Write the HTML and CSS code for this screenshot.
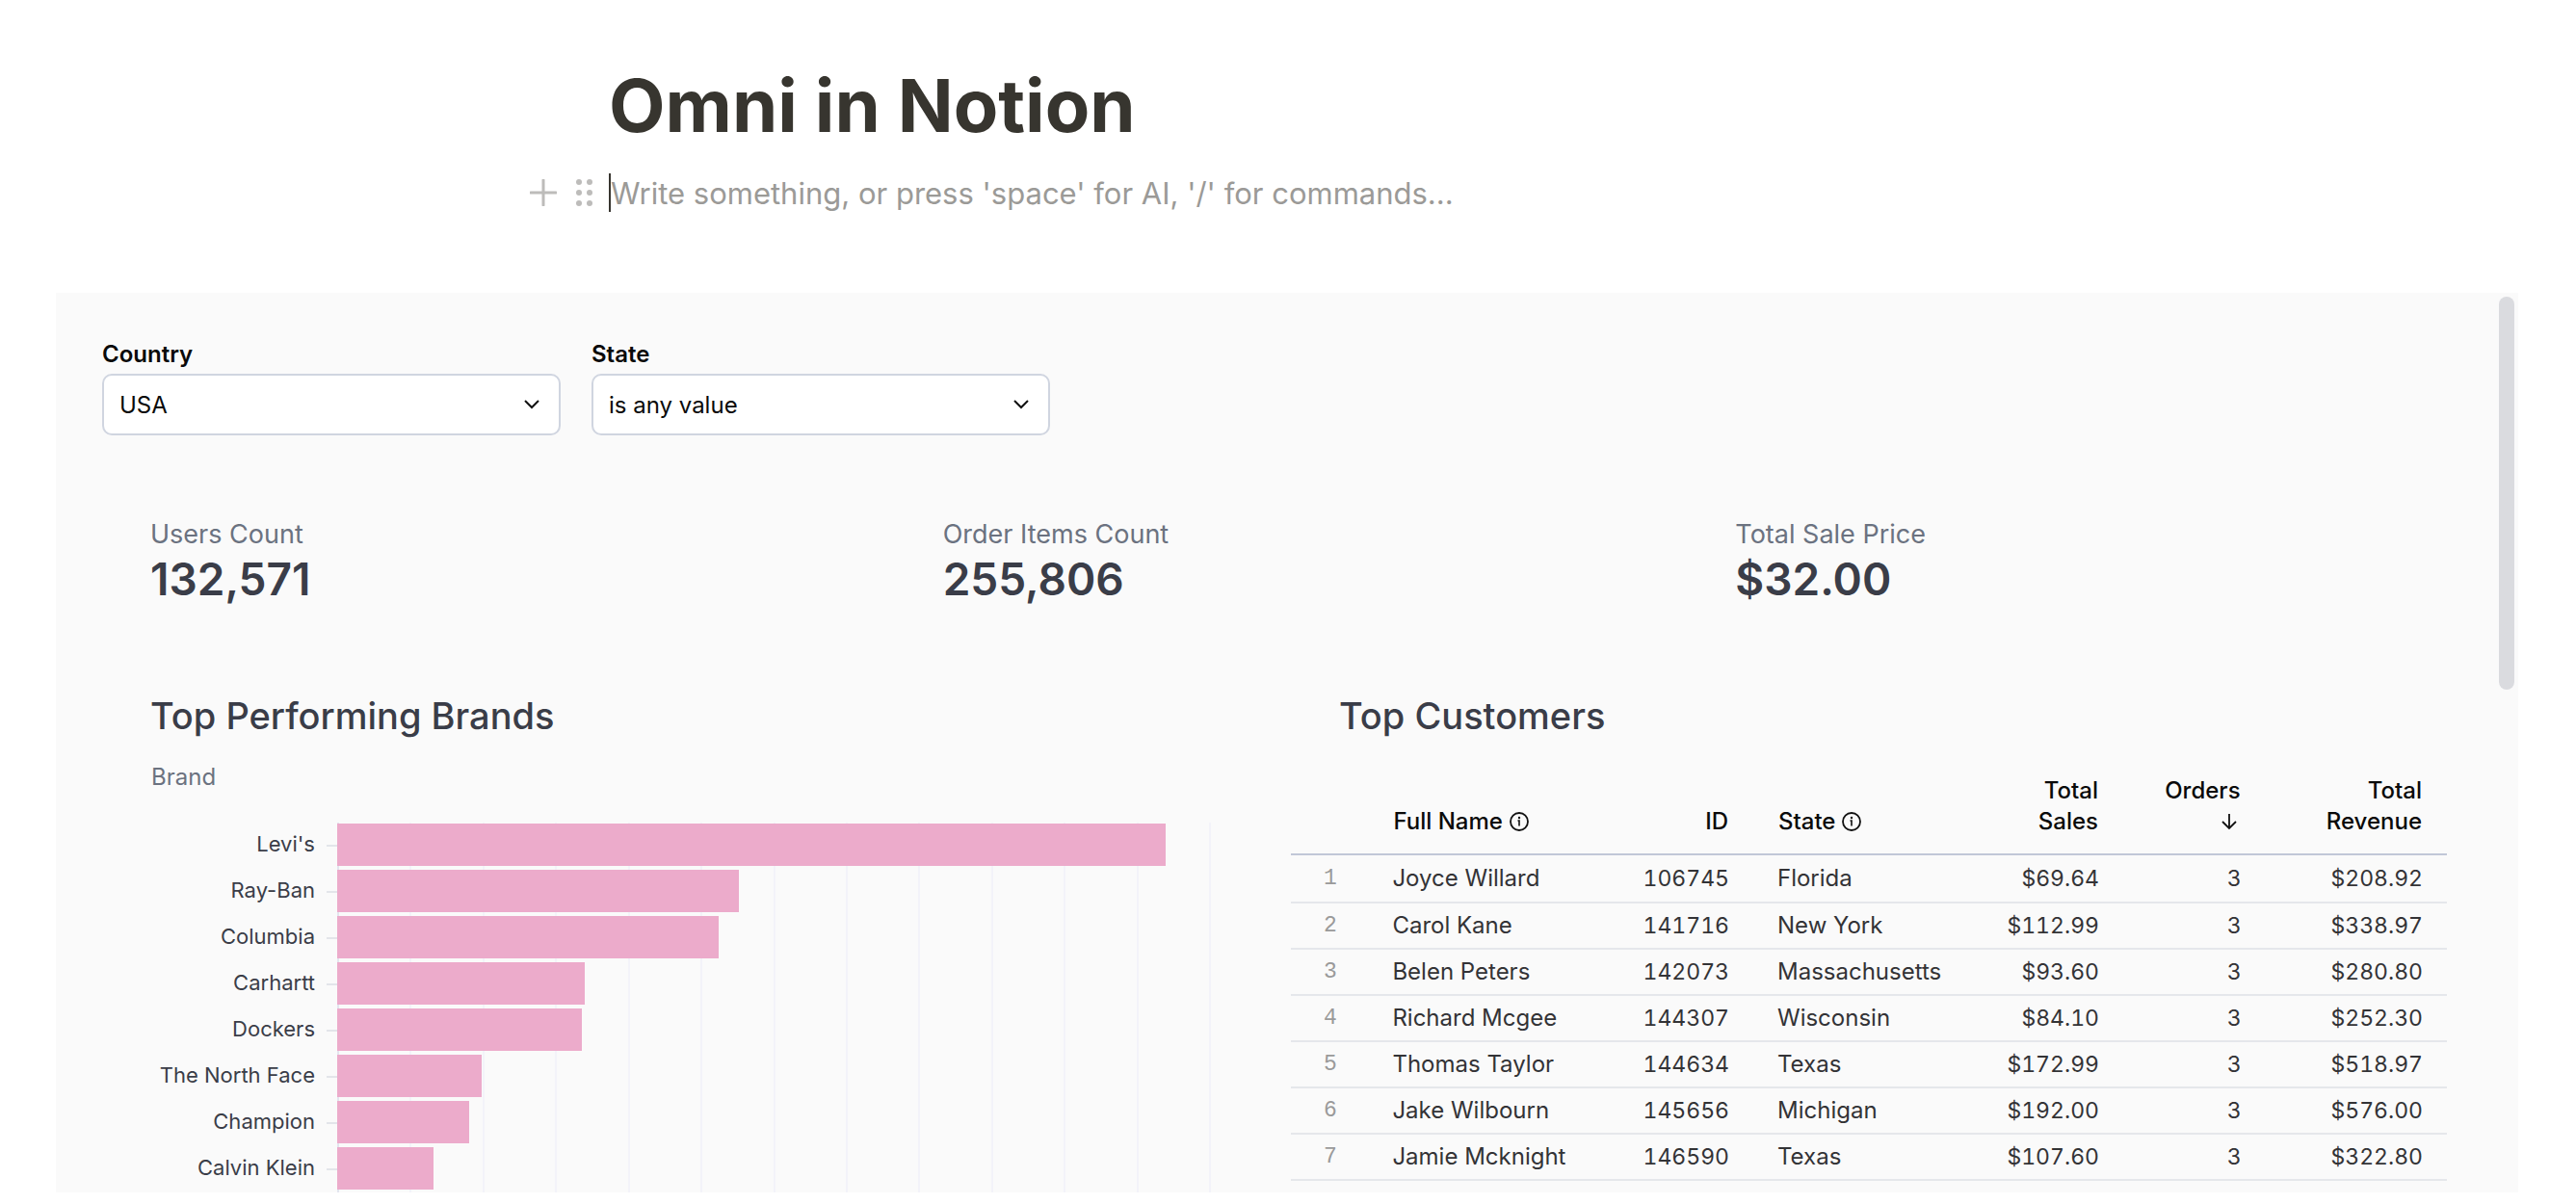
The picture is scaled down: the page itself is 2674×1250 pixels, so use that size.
FILE: index.html
```html
<!DOCTYPE html>
<html lang="en">
<head>
    <meta charset="utf-8">
    <title>Omni in Notion</title>
    <link rel="stylesheet" href="styles.css">
</head>
<body>

<header class="page-head">
    <h1>Omni in Notion</h1>
    <div class="block">
        <button class="handle" aria-label="Add block">
            <svg width="28" height="28" viewBox="0 0 28 28"><path d="M14 1v26M1 14h26" stroke="#bdbcba" stroke-width="3" stroke-linecap="round"/></svg>
        </button>
        <button class="handle" aria-label="Drag block">
            <svg width="18" height="30" viewBox="0 0 18 30" fill="#bdbcba">
                <circle cx="3" cy="4" r="3"/><circle cx="14" cy="4" r="3"/>
                <circle cx="3" cy="15" r="3"/><circle cx="14" cy="15" r="3"/>
                <circle cx="3" cy="26" r="3"/><circle cx="14" cy="26" r="3"/>
            </svg>
        </button>
        <input type="text" class="editor" aria-label="Block text" placeholder="Write something, or press 'space' for AI, '/' for commands...">
    </div>
</header>

<main class="dashboard">
    <div class="thumb"></div>

    <div class="filters">
        <div class="filter">
            <label for="country">Country</label>
            <div class="select">
                <select id="country"><option>USA</option></select>
                <svg class="chevron" width="16" height="10" viewBox="0 0 16 10"><path d="M1 1l7 7 7-7" fill="none" stroke="#111" stroke-width="2"/></svg>
            </div>
        </div>
        <div class="filter">
            <label for="state">State</label>
            <div class="select">
                <select id="state"><option>is any value</option></select>
                <svg class="chevron" width="16" height="10" viewBox="0 0 16 10"><path d="M1 1l7 7 7-7" fill="none" stroke="#111" stroke-width="2"/></svg>
            </div>
        </div>
    </div>

    <section class="kpis">
        <div class="kpi"><p>Users Count</p><strong>132,571</strong></div>
        <div class="kpi"><p>Order Items Count</p><strong>255,806</strong></div>
        <div class="kpi"><p>Total Sale Price</p><strong>$32.00</strong></div>
    </section>

    <div class="tiles">
        <section class="tile">
            <h2>Top Performing Brands</h2>
            <p class="axis-title">Brand</p>
            <div class="chart">
                <div class="grid"><i></i><i></i><i></i><i></i><i></i><i></i><i></i><i></i><i></i><i></i><i></i><i></i></div>
                <div class="row"><span>Levi's</span><div class="track"><div class="bar" style="width: 94.8%"></div></div></div>
                <div class="row"><span>Ray-Ban</span><div class="track"><div class="bar" style="width: 46%"></div></div></div>
                <div class="row"><span>Columbia</span><div class="track"><div class="bar" style="width: 43.7%"></div></div></div>
                <div class="row"><span>Carhartt</span><div class="track"><div class="bar" style="width: 28.3%"></div></div></div>
                <div class="row"><span>Dockers</span><div class="track"><div class="bar" style="width: 28%"></div></div></div>
                <div class="row"><span>The North Face</span><div class="track"><div class="bar" style="width: 16.5%"></div></div></div>
                <div class="row"><span>Champion</span><div class="track"><div class="bar" style="width: 15.1%"></div></div></div>
                <div class="row"><span>Calvin Klein</span><div class="track"><div class="bar" style="width: 11%"></div></div></div>
            </div>
        </section>

        <section class="tile customers">
            <h2>Top Customers</h2>
            <table>
                <colgroup>
                    <col class="c-index"><col class="c-name"><col class="c-id"><col class="c-state"><col class="c-sales"><col class="c-orders"><col class="c-revenue">
                </colgroup>
                <thead>
                    <tr>
                        <th></th>
                        <th>Full Name<svg class="info" width="20" height="20" viewBox="0 0 20 20"><circle cx="10" cy="10" r="9" fill="none" stroke="#111" stroke-width="1.8"/><circle cx="10" cy="6" r="1.2" fill="#111"/><path d="M8.5 9h1.5v5.5" fill="none" stroke="#111" stroke-width="1.6"/></svg></th>
                        <th class="num">ID</th>
                        <th>State<svg class="info" width="20" height="20" viewBox="0 0 20 20"><circle cx="10" cy="10" r="9" fill="none" stroke="#111" stroke-width="1.8"/><circle cx="10" cy="6" r="1.2" fill="#111"/><path d="M8.5 9h1.5v5.5" fill="none" stroke="#111" stroke-width="1.6"/></svg></th>
                        <th class="num">Total<br>Sales</th>
                        <th class="num">Orders<br><svg class="sort" width="16" height="18" viewBox="0 0 16 18"><path d="M8 1v15M1 9l7 7 7-7" fill="none" stroke="#111" stroke-width="1.8"/></svg></th>
                        <th class="num">Total<br>Revenue</th>
                    </tr>
                </thead>
                <tbody>
                    <tr><td>1</td><td>Joyce Willard</td><td class="num">106745</td><td>Florida</td><td class="num">$69.64</td><td class="num">3</td><td class="num">$208.92</td></tr>
                    <tr><td>2</td><td>Carol Kane</td><td class="num">141716</td><td>New York</td><td class="num">$112.99</td><td class="num">3</td><td class="num">$338.97</td></tr>
                    <tr><td>3</td><td>Belen Peters</td><td class="num">142073</td><td>Massachusetts</td><td class="num">$93.60</td><td class="num">3</td><td class="num">$280.80</td></tr>
                    <tr><td>4</td><td>Richard Mcgee</td><td class="num">144307</td><td>Wisconsin</td><td class="num">$84.10</td><td class="num">3</td><td class="num">$252.30</td></tr>
                    <tr><td>5</td><td>Thomas Taylor</td><td class="num">144634</td><td>Texas</td><td class="num">$172.99</td><td class="num">3</td><td class="num">$518.97</td></tr>
                    <tr><td>6</td><td>Jake Wilbourn</td><td class="num">145656</td><td>Michigan</td><td class="num">$192.00</td><td class="num">3</td><td class="num">$576.00</td></tr>
                    <tr><td>7</td><td>Jamie Mcknight</td><td class="num">146590</td><td>Texas</td><td class="num">$107.60</td><td class="num">3</td><td class="num">$322.80</td></tr>
                </tbody>
            </table>
        </section>
    </div>
</main>

</body>
</html>
```
FILE: styles.css
```css
* {
    box-sizing: border-box;
}
body {
    display: flex;
    flex-direction: column;
    height: 100vh;
    margin: 0;
    background: #fff;
    font-family: Inter, sans-serif;
    font-size: 24px;
    color: #0a0a0a;
}
h1, h2, p {
    margin: 0;
}

/* Notion page */
.page-head {
    width: 100%;
    max-width: 1410px;
    margin: 0 auto;
    padding-top: 61px;
}
h1 {
    font-size: 76px;
    line-height: 96px;
    font-weight: 700;
    color: #37352f;
}
.block {
    display: flex;
    align-items: center;
    margin: 23px 0 84px -82px;
}
.handle {
    display: flex;
    margin-right: 20px;
    padding: 0;
    border: none;
    background: none;
    cursor: pointer;
}
.handle + .handle {
    margin-right: 16px;
}
.editor {
    flex: 1;
    height: 40px;
    padding: 0;
    border: none;
    border-left: 2px solid #37352f;
    background: none;
    font: inherit;
    font-size: 31px;
    outline: none;
}
.editor::placeholder {
    color: #9b9a97;
    opacity: 1;
}

/* Embedded dashboard */
.dashboard {
    position: relative;
    flex: 1;
    min-height: 0;
    margin: 0 60px 12px 58px;
    padding: 48px 40px 0 48px;
    overflow: hidden;
    background: #fafafa;
}
.thumb {
    position: absolute;
    top: 4px;
    right: 4px;
    width: 16px;
    height: 408px;
    border-radius: 8px;
    background: #dadbdf;
}
.filters {
    display: flex;
    gap: 32px;
}
.filter {
    width: 476px;
}
.filter label {
    display: block;
    margin-bottom: 4px;
    line-height: 32px;
    font-weight: 600;
}
.select {
    position: relative;
}
select {
    appearance: none;
    display: block;
    width: 100%;
    height: 64px;
    padding: 0 48px 0 16px;
    border: 2px solid #d0d5e0;
    border-radius: 10px;
    background: #fff;
    font: inherit;
    color: #0a0a0a;
}
.chevron {
    position: absolute;
    top: 27px;
    right: 22px;
    pointer-events: none;
}

.kpis {
    display: grid;
    grid-template-columns: repeat(3, 1fr);
    margin-top: 85px;
}
.kpi {
    padding-left: 50px;
}
.kpi p {
    font-size: 27px;
    line-height: 36px;
    color: #6b7280;
}
.kpi strong {
    display: block;
    font-size: 46px;
    line-height: 56px;
    font-weight: 600;
    color: #3a3d48;
}

.tiles {
    display: grid;
    grid-template-columns: repeat(2, 1fr);
    margin-top: 90px;
}
h2 {
    padding-left: 50px;
    font-size: 38px;
    line-height: 48px;
    font-weight: 500;
    color: #3a3d48;
}
.axis-title {
    margin-top: 24px;
    padding-left: 51px;
    line-height: 32px;
    color: #6b7280;
}

/* Bar chart */
.chart {
    position: relative;
    margin: 31px 83px 0 0;
}
.grid {
    position: absolute;
    inset: 0 0 0 244px;
    display: flex;
    border-left: 2px solid #e3e5ef;
}
.grid i {
    flex: 1;
    border-right: 2px solid #f3f3f9;
}
.row {
    position: relative;
    display: flex;
    align-items: center;
    height: 48px;
}
.row span {
    width: 221px;
    padding-bottom: 5px;
    text-align: right;
    font-size: 22px;
    color: #3a3d48;
}
.row::after {
    content: "";
    order: 1;
    width: 11px;
    height: 2px;
    margin-left: 12px;
    background: #e3e5ea;
}
.track {
    order: 2;
    flex: 1;
    padding-bottom: 2px;
}
.bar {
    height: 44px;
    background: #ecabcb;
}

/* Customers table */
.customers {
    padding-right: 34px;
}
table {
    width: 100%;
    margin-top: 38px;
    table-layout: fixed;
    border-collapse: separate;
    border-spacing: 0;
}
.c-index { width: 6.7%; }
.c-name { width: 19.9%; }
.c-id { width: 13.4%; }
.c-state { width: 19.1%; }
.c-sales { width: 12.9%; }
.c-orders { width: 12.3%; }
.c-revenue { width: 15.7%; }
th {
    padding: 0 26px 17px;
    border-bottom: 2px solid #c1c7d7;
    text-align: left;
    vertical-align: bottom;
    line-height: 32px;
    font-weight: 500;
    white-space: nowrap;
}
td {
    height: 48px;
    padding: 0 25px;
    border-bottom: 2px solid #e5e7eb;
    line-height: 32px;
    color: #333336;
    white-space: nowrap;
}
tbody tr:first-child td {
    height: 50px;
}
td:first-child {
    padding: 0 34px;
    font-family: "Liberation Mono", monospace;
    font-size: 23px;
    color: #9a9a9a;
}
.num {
    text-align: right;
    font-variant-numeric: tabular-nums;
}
td.num {
    font-size: 23px;
}
.info {
    margin-left: 7px;
    vertical-align: -2px;
}
.sort {
    margin-right: 4px;
    vertical-align: -1px;
}
```
